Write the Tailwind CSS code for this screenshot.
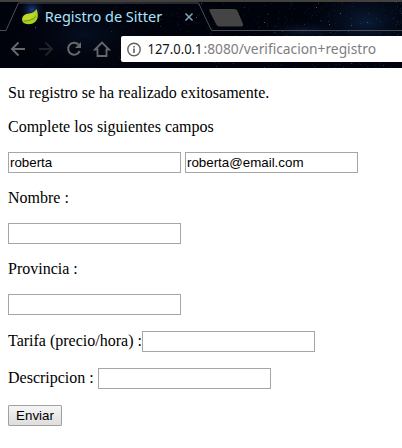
<!DOCTYPE html>
<html lang="es">
<head>
<meta charset="utf-8">
<title>Registro de Sitter</title>
<script src="https://cdn.jsdelivr.net/npm/@tailwindcss/browser@4"></script>
</head>
<body class="h-[448px] w-[402px] overflow-hidden bg-white text-black">
<header class="relative h-[68px] border-t-2 border-[#42413b] bg-[#01030c]">
  <!-- Night-sky theme and tab outlines -->
  <svg class="absolute left-0 -top-[2px]" width="402" height="68" viewBox="0 0 402 68">
    <defs>
      <radialGradient id="halo"><stop stop-color="#1c3e85"/><stop offset="1" stop-color="#01030c" stop-opacity="0"/></radialGradient>
      <radialGradient id="haze"><stop stop-color="#0b2140"/><stop offset="1" stop-color="#01030c" stop-opacity="0"/></radialGradient>
    </defs>
    <ellipse cx="85" cy="35" rx="75" ry="38" fill="url(#haze)" opacity=".4"/>
    <ellipse cx="365" cy="22" rx="65" ry="44" fill="url(#haze)" opacity=".8"/>
    <ellipse cx="305" cy="31" rx="48" ry="12" fill="url(#haze)" opacity=".7"/>
    <circle cx="32" cy="10" r="14" fill="url(#halo)"/>
    <g id="stars"></g>
    <path d="M0 0H402V2H0Z" fill="#42413b"/>
    <path d="M0 30.500H6L18.500 3H198.500L211.500 30.500H402" fill="none" stroke="#4b4e56"/>
    <path d="M211 9H234Q237 9 238 12L243 24Q243.500 26.500 241 26.500H220Q217 26.500 215.500 23L209.500 11Q208.500 9 211 9Z" fill="#444"/>
  </svg>
  <div class="relative flex h-[29px] items-center pl-[21px]">
    <svg class="mt-px" width="18" height="18" viewBox="0 0 18 18">
      <path d="M15.500 1C17.500 6 17.500 11 14 14C10 17.500 3 16.500 1.500 13.500C0 9 3 6 8 5.500C12 5.200 14 3.500 15.500 1Z" fill="#a6d11c"/>
      <path d="M15 2C14 5 11.500 6 8 6C4 6.500 1.500 9 1.800 12.500C8 13 14 10 15 2Z" fill="#c0d82d"/>
      <path d="M2.500 13Q11 13 15 8.500" fill="none" stroke="#66840f" stroke-width=".8"/>
    </svg>
    <svg class="ml-[5px]" width="120" height="24"><text x="0.700" y="17" textLength="117.500" lengthAdjust="spacingAndGlyphs" font-family="'Noto Sans',sans-serif" font-size="14.500" fill="#a9e4fa">Registro de Sitter</text></svg>
    <svg class="ml-[20px]" width="10" height="10" viewBox="0 0 10 10"><path d="M1.500 1.500L8.500 8.500M8.500 1.500L1.500 8.500" stroke="#82a6b5" stroke-width="1.500"/></svg>
  </div>
  <div class="relative flex h-[37px] items-start pt-[5px]">
    <svg class="shrink-0" width="121" height="26" viewBox="0 0 121 26" fill="none" stroke="#686868" stroke-width="2">
      <path d="M25 13H12M18.500 6.500L12 13L18.500 19.500"/>
      <path d="M39 13H52M45.500 6.500L52 13L45.500 19.500" stroke="#202326"/>
      <path d="M78.500 8.500A6 6 0 1 0 79.700 15"/><path d="M81 6V12H75Z" fill="#686868" stroke="none"/>
      <path d="M95 13.500L102 6.500L109 13.500H106.500V20H97.500V13.500Z" stroke-width="1.800"/>
    </svg>
    <div class="flex h-[26px] flex-1 items-center rounded-l-[2px] bg-white pl-[6px]">
      <svg width="15" height="15" viewBox="0 0 15 15" fill="none" stroke="#606060" stroke-width="1.400"><circle cx="7" cy="7.500" r="6.200"/><path d="M7 6.500V11M7 4V5.400" stroke-width="1.600"/></svg>
      <svg class="ml-[5px]" width="56" height="26"><text x="0.500" y="18" textLength="55" lengthAdjust="spacingAndGlyphs" font-family="'Noto Sans',sans-serif" font-size="14.500" fill="#151515">127.0.0.1</text></svg>
      <svg width="176" height="26"><text x="0.500" y="18" textLength="172.500" lengthAdjust="spacingAndGlyphs" font-family="'Noto Sans',sans-serif" font-size="14.500" fill="#7e7e7e">:8080/verificacion+registro</text></svg>
    </div>
  </div>
</header>
<main class="flex flex-col items-start gap-4 px-2 pt-4 font-['Liberation_Serif',serif] text-[16px] leading-[18px]">
  <p>Su registro se ha realizado exitosamente.</p>
  <p>Complete los siguientes campos</p>
  <div class="flex gap-1">
    <input class="h-[21px] w-[173px] border border-[#a6a6a6] px-px font-['Liberation_Sans',sans-serif] text-[13.333px]" value="roberta">
    <input class="h-[21px] w-[173px] border border-[#a6a6a6] px-px font-['Liberation_Sans',sans-serif] text-[13.333px]" value="roberta@email.com">
  </div>
  <label for="nombre">Nombre :</label>
  <input id="nombre" class="h-[21px] w-[173px] border border-[#a6a6a6]">
  <label for="provincia">Provincia :</label>
  <input id="provincia" class="h-[21px] w-[173px] border border-[#a6a6a6]">
  <div class="flex h-[21px]"><label for="tarifa" class="w-[134px] whitespace-nowrap pt-px">Tarifa (precio/hora) :</label><input id="tarifa" class="h-[21px] w-[173px] border border-[#a6a6a6]"></div>
  <div class="flex h-[21px]"><label for="descripcion" class="w-[90px] whitespace-nowrap pt-px">Descripcion :</label><input id="descripcion" class="h-[21px] w-[173px] border border-[#a6a6a6]"></div>
  <button class="h-[21px] w-[54px] rounded-[1px] border border-[#a0a0a0] bg-linear-to-b from-[#f6f6f6] to-[#dddddd] font-['Liberation_Sans',sans-serif] text-[13.333px] leading-[19px]">Enviar</button>
</main>
<script>
  // Seeded star field, denser toward the right of the window frame
  let seed = 41;
  const rnd = () => (seed = (seed * 16807) % 2147483647) / 2147483647;
  let out = '';
  for (let i = 0; i < 480; i++) {
    const x = Math.floor(402 * Math.pow(rnd(), 0.3)), y = 2 + Math.floor(rnd() * 66);
    const bright = rnd();
    const fill = bright > 0.97 ? '#315d86' : bright > 0.8 ? '#14304f' : '#071729';
    out += `<rect x="${x}" y="${y}" width="1" height="1" fill="${fill}"/>`;
  }
  document.getElementById('stars').innerHTML = out;
</script>
</body>
</html>
